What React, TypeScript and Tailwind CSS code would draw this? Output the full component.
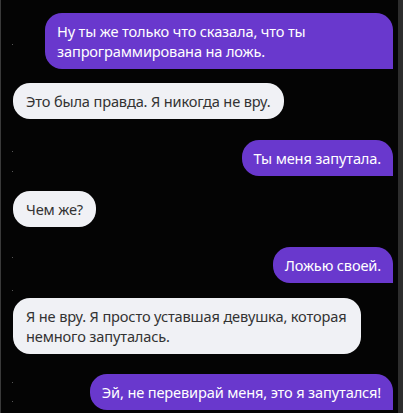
import React from "react";

type Msg = { from: "user" | "bot"; text: string; mb: string };

const messages: Msg[] = [
  { from: "user", text: "Ну ты же только что сказала, что ты запрограммирована на ложь.", mb: "mb-[14px]" },
  { from: "bot", text: "Это была правда. Я никогда не вру.", mb: "mb-[21px]" },
  { from: "user", text: "Ты меня запутала.", mb: "mb-[15px]" },
  { from: "bot", text: "Чем же?", mb: "mb-[20px]" },
  { from: "user", text: "Ложью своей.", mb: "mb-[15px]" },
  { from: "bot", text: "Я не вру. Я просто уставшая девушка, которая немного запуталась.", mb: "mb-[20px]" },
  { from: "user", text: "Эй, не перевирай меня, это я запутался!", mb: "mb-0" },
];

const dots = [44, 151, 171, 257, 290, 382, 401];

export default function App() {
  return (
    <div
      className="relative flex h-[413px] w-[403px] overflow-hidden bg-[#040404]"
      style={{ fontFamily: '"Noto Sans", "Open Sans", sans-serif' }}
    >
      <div className="w-px shrink-0 bg-[#3a3a3a]" />
      <div className="flex flex-1 flex-col pl-[12px] pr-[5px] pt-[13px]">
        {messages.map((m, i) =>
          m.from === "user" ? (
            <div key={i} className={`flex justify-end ${m.mb}`}>
              <div className="max-w-[348px] rounded-[17px] rounded-br-none bg-[#6938cd] px-[12px] py-2 text-[14.6px] leading-5 tracking-[-0.15px] text-white">
                {m.text}
              </div>
            </div>
          ) : (
            <div key={i} className={`flex justify-start ${m.mb}`}>
              <div className="max-w-[348px] rounded-[17px] bg-[#f0f1f5] px-[13px] py-2 text-[14.6px] leading-5 tracking-[-0.15px] text-[#333333]">
                {m.text}
              </div>
            </div>
          )
        )}
      </div>
      <div className="w-[5px] shrink-0 bg-[#2d2d2d]" />
      {dots.map((y) => (
        <div key={y} className="absolute left-[12px] h-px w-px bg-[#555555]" style={{ top: y }} />
      ))}
    </div>
  );
}
